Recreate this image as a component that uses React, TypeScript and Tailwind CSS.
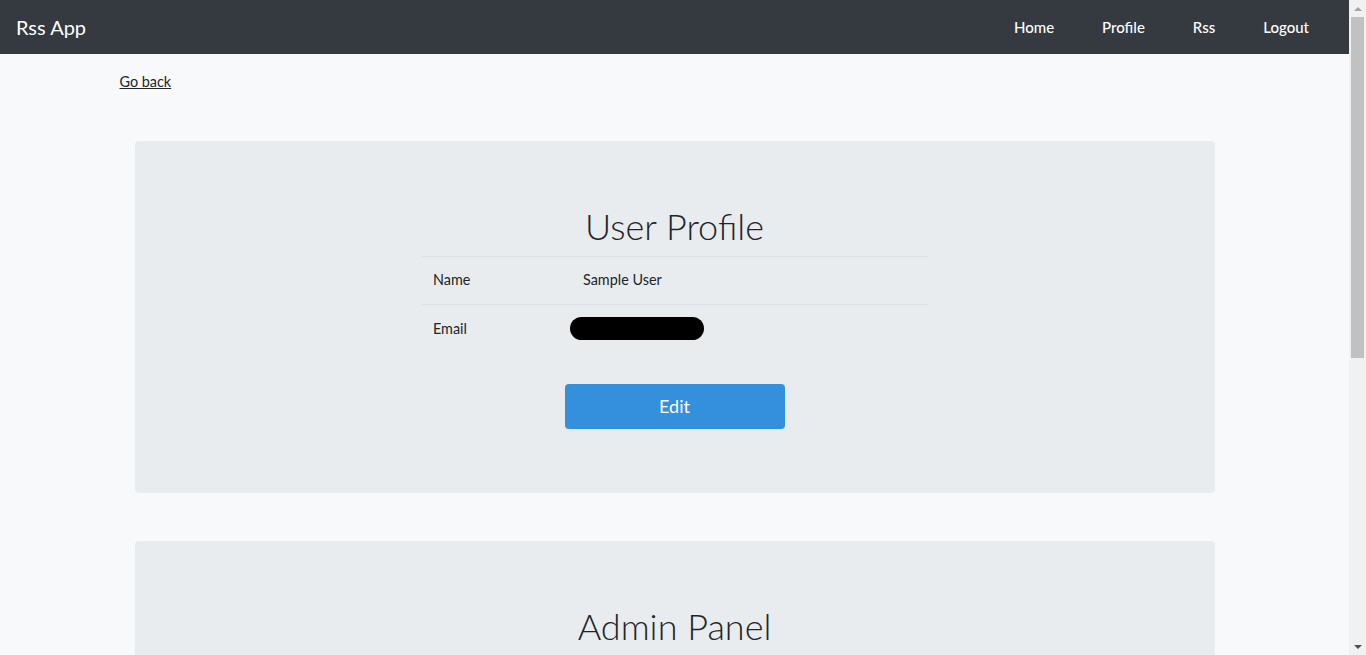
const navLinks = ["Home", "Profile", "Rss", "Logout"];

const Panel = ({ title, children }: { title: string; children?: React.ReactNode }) => (
  <div className="rounded bg-[#e9ecef] px-8 py-16">
    <h2 className="text-center text-[36px] leading-[43px] font-light text-[#212529] mb-2">{title}</h2>
    {children}
  </div>
);

export default function App() {
  return (
    <div className="min-h-screen bg-[#f8f9fa] font-['Lato','Open_Sans',sans-serif] text-[14.4px] text-[#212529]">
      <div className="mr-[17px]">
        <nav className="flex h-[54px] items-center justify-between bg-[#343a40] px-4">
          <a className="text-[20px] text-white">Rss App</a>
          <ul className="flex items-center">
            {navLinks.map((l) => (
              <li key={l}>
                <a className="px-6 text-[15px] font-medium text-white">{l}</a>
              </li>
            ))}
          </ul>
        </nav>

        <div className="mx-auto max-w-[1140px] px-[15px]">
          <div className="pt-[17px] pb-[48px]">
            <a className="underline text-[14.4px] leading-[20px]">Go back</a>
          </div>

          <div className="flex flex-col gap-[48px] px-[15px] pb-16">
            <Panel title="User Profile">
              <table className="mx-auto w-[507px] border-collapse">
                <tbody>
                  <tr className="border-t border-[#dee2e6]">
                    <td className="h-[48px] w-[150px] px-3">Name</td>
                    <td className="px-3">Sample User</td>
                  </tr>
                  <tr className="border-t border-[#dee2e6]">
                    <td className="h-[48px] px-3">Email</td>
                    <td className="px-0">
                      <span className="ml-[-1px] inline-block h-[23px] w-[134px] rounded-full bg-black align-middle" />
                    </td>
                  </tr>
                </tbody>
              </table>
              <div className="mt-8 flex justify-center">
                <button className="h-[45px] w-[220px] rounded bg-[#3490dc] text-[18px] text-white">Edit</button>
              </div>
            </Panel>

            <Panel title="Admin Panel">
              <div className="h-[200px]" />
            </Panel>
          </div>
        </div>
      </div>

      <div className="fixed right-0 top-0 flex h-screen w-[17px] flex-col items-center bg-[#f1f1f1]">
        <div className="flex h-[17px] items-center justify-center">
          <div className="h-0 w-0 border-x-[4px] border-b-[4px] border-x-transparent border-b-[#a3a3a3]" />
        </div>
        <div className="mx-[2px] h-[341px] w-[13px] bg-[#c1c1c1]" />
        <div className="flex-1" />
        <div className="flex h-[17px] items-center justify-center">
          <div className="h-0 w-0 border-x-[4px] border-t-[4px] border-x-transparent border-t-[#505050]" />
        </div>
      </div>
    </div>
  );
}
